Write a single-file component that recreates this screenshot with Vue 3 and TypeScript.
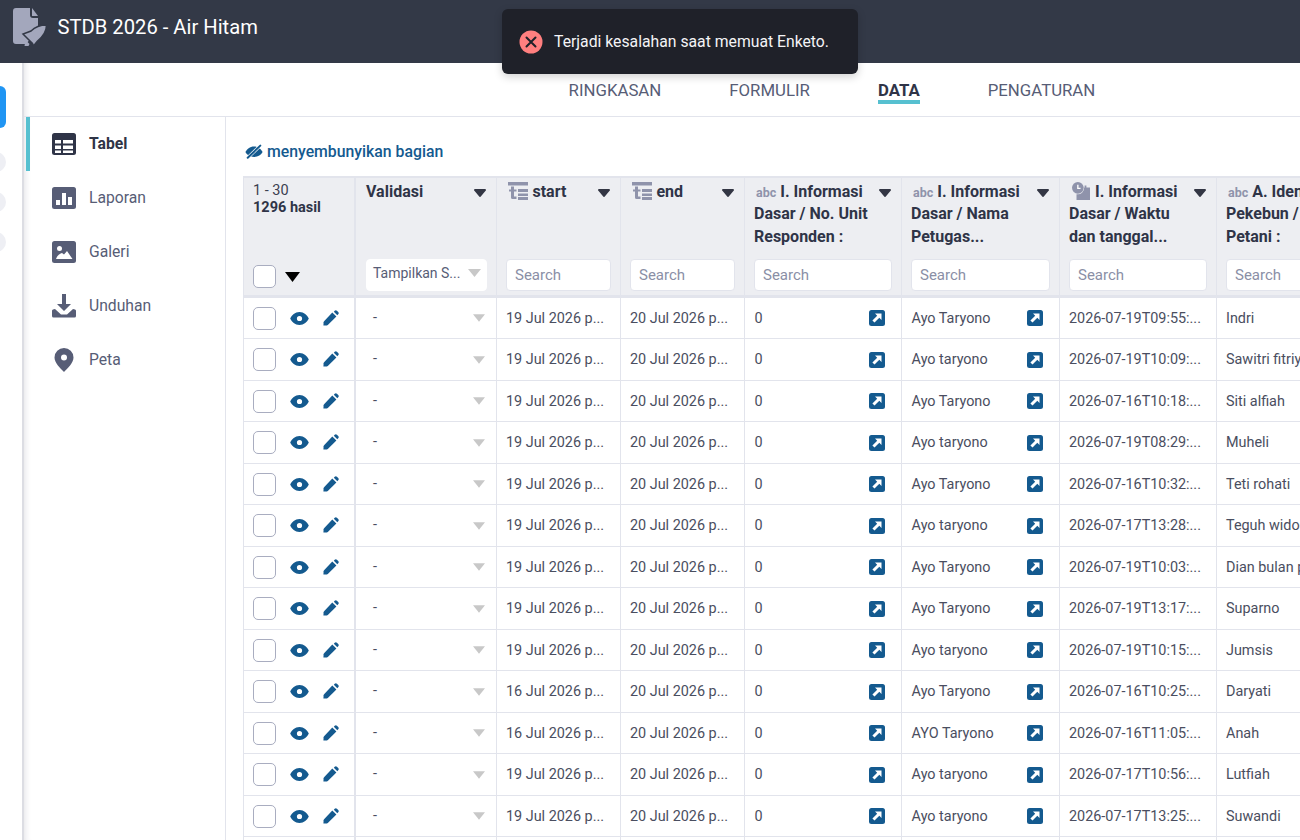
<template>
  <div class="page">
    <header class="topbar">
      <svg class="logo" viewBox="0 0 34 38" width="34" height="38">
        <path d="M3 0h14v7a3 3 0 0 0 3 3h5v12L13 36H3a3 3 0 0 1-3-3V3a3 3 0 0 1 3-3z" fill="#a3a7bc" />
        <path d="M19 0l6 8h-6z" fill="#a3a7bc" />
        <path d="M33.500 17C27 17 22 19 18 23l-8 3 4.500 4.500 5 5 1 2.500 4-5c5-4 9-10 9-16z" fill="#a3a7bc" stroke="#333947" stroke-width="1.500" />
        <path d="M12.500 32l4 4-1 2h-4z" fill="#a3a7bc" />
      </svg>
      <h1>STDB 2026 - Air Hitam</h1>
    </header>

    <div class="toast">
      <span class="toast-icon">
        <svg viewBox="0 0 24 24" width="24" height="24">
          <circle cx="12" cy="12" r="11.5" fill="#ff7f7f" />
          <path d="M7.5 7.5l9 9M16.5 7.5l-9 9" stroke="#1f2129" stroke-width="2" stroke-linecap="round" />
        </svg>
      </span>
      <span>Terjadi kesalahan saat memuat Enketo.</span>
    </div>

    <div class="body">
      <aside class="rail">
        <span class="rail-active"></span>
        <span class="rail-dot" v-for="n in 3" :key="n"></span>
      </aside>

      <div class="content">
        <nav class="tabs">
          <a v-for="tab in tabs" :key="tab" :class="{ active: tab === 'DATA' }">{{ tab }}</a>
        </nav>

        <div class="split">
          <ul class="side">
            <li class="side-item active">
              <svg viewBox="0 0 24 22" width="24" height="22">
                <rect width="24" height="22" rx="2.5" fill="#2f3447" />
                <path d="M3 7h6v3.5H3zM11 7h10v3.5H11zM3 12.5h6V16H3zM11 12.5h10V16H11zM3 17.5h6V20H3zM11 17.5h10V20H11z" fill="#fff" />
              </svg>
              <span>Tabel</span>
            </li>
            <li class="side-item">
              <svg viewBox="0 0 24 22" width="24" height="22">
                <rect width="24" height="22" rx="2.5" fill="#575d76" />
                <path d="M4 13h4v5H4zM10 6h4v12h-4zM16 10h4v8h-4z" fill="#fff" />
              </svg>
              <span>Laporan</span>
            </li>
            <li class="side-item">
              <svg viewBox="0 0 24 22" width="24" height="22">
                <rect width="24" height="22" rx="2.5" fill="#575d76" />
                <circle cx="7.5" cy="7.5" r="2.5" fill="#fff" />
                <path d="M4 18c1-3 3-5 6-6l2 1.500 3-3.500 5.500 8z" fill="#fff" />
              </svg>
              <span>Galeri</span>
            </li>
            <li class="side-item">
              <svg viewBox="0 0 24 24" width="24" height="24">
                <path d="M10 0h4v10h5l-7 7-7-7h5z" fill="#575d76" />
                <path d="M1 15.500l2-.500 6 5.500h6l6-5.500 2 .500a1.500 1.500 0 0 1 1 1.500v5a1.500 1.500 0 0 1-1.500 1.500h-21A1.500 1.500 0 0 1 0 22v-5a1.500 1.500 0 0 1 1-1.500z" fill="#575d76" />
              </svg>
              <span>Unduhan</span>
            </li>
            <li class="side-item">
              <svg class="pin" viewBox="0 0 20 24" width="20" height="24">
                <path fill-rule="evenodd" d="M10 0a9.500 9.500 0 0 1 9.500 9.500c0 5.500-6 11-9.500 14.500C6.500 20.500.500 15 .500 9.500A9.500 9.500 0 0 1 10 0zm0 6.500a3 3 0 1 0 0 6 3 3 0 0 0 0-6z" fill="#575d76" />
              </svg>
              <span>Peta</span>
            </li>
          </ul>

          <main class="main">
            <a class="hide-link">
              <svg viewBox="0 0 20 16" width="18" height="15">
                <path d="M10 2.500C5.500 2.500 2 5.500.500 8.500 2 11.500 5.500 14 10 14s8-2.500 9.500-5.500C18 5.500 14.500 2.500 10 2.500z" fill="#145a8f" />
                <path d="M2.500 15.500L17.500 1" stroke="#fff" stroke-width="3.500" />
                <path d="M3 15L17 1.500" stroke="#145a8f" stroke-width="2.200" stroke-linecap="round" />
              </svg>
              menyembunyikan bagian
            </a>

            <div class="tbl">
              <div class="row head">
                <div class="th first">
                  <div class="count">1 - 30<br /><b>1296 hasil</b></div>
                  <div class="select-all">
                    <span class="check"></span>
                    <svg viewBox="0 0 15 10" width="15" height="10"><path d="M0 0h15l-7.500 10z" fill="#000" /></svg>
                  </div>
                </div>
                <div v-for="col in columns" :key="col.label" class="th" :class="{ 'th-valid': col.kind === 'select' }">
                  <div class="th-top">
                    <div class="th-label">
                      <span v-if="col.kind === 'abc'" class="abc">abc</span>
                      <svg v-else-if="col.kind === 'date'" class="kind date" viewBox="0 0 20 18" width="20" height="18">
                        <rect width="20" height="3.500" fill="#8f93ab" />
                        <path d="M3 4.500h3v3h2.500v2H6v5h2.500V17H4.500A1.500 1.500 0 0 1 3 15.500v-6H1v-2h2z" fill="#8f93ab" />
                        <path d="M10 7h10v3H10zM10 11.500h10v2.500H10zM10 15h10v3H10z" fill="#8f93ab" />
                      </svg>
                      <svg v-else-if="col.kind === 'time'" class="kind time" viewBox="0 0 20 20" width="18" height="18">
                        <circle cx="6.500" cy="6.500" r="6.500" fill="#8f93ab" />
                        <path d="M6.500 3v4h3" stroke="#fff" stroke-width="1.500" fill="none" />
                        <path d="M14 4h2v2h4v14H5V13.500A7 7 0 0 0 13.500 6H14z" fill="#8f93ab" />
                      </svg>
                      {{ col.label }}
                    </div>
                    <svg class="sort" viewBox="0 0 12 8" width="12" height="8"><path d="M1 0h10a1 1 0 0 1 .8 1.600L6.800 7.500a1 1 0 0 1-1.600 0L.200 1.600A1 1 0 0 1 1 0z" fill="#333644" /></svg>
                  </div>
                  <div v-if="col.kind === 'select'" class="filter-select">
                    <span>Tampilkan S...</span>
                    <svg viewBox="0 0 13 8" width="13" height="8"><path d="M0 0h13l-6.500 8z" fill="#c8c8c8" /></svg>
                  </div>
                  <input v-else class="search" type="text" placeholder="Search" />
                </div>
              </div>

              <div v-for="(r, i) in rows" :key="i" class="row">
                <div class="td actions">
                  <span class="check"></span>
                  <svg class="eye" viewBox="0 0 20 14" width="19" height="13">
                    <path fill-rule="evenodd" d="M10 0c4.800 0 8.300 3.500 10 7-1.700 3.500-5.200 7-10 7S1.700 10.500 0 7c1.700-3.500 5.200-7 10-7zm0 4.200a2.800 2.800 0 1 0 0 5.600 2.800 2.800 0 0 0 0-5.600z" fill="#145a8f" />
                  </svg>
                  <svg class="pencil" viewBox="0 0 16 16" width="16" height="16">
                    <path d="M9.300 2.500l4.100 4.100-8.600 8.300a2 2 0 0 1-1 .5L.400 15.600l.2-3.300a2 2 0 0 1 .5-1z" fill="#145a8f" />
                    <path d="M10.800 1.700l.9-.9a1.600 1.600 0 0 1 2.200 0l1.300 1.300a1.600 1.600 0 0 1 0 2.200l-.9.900z" fill="#145a8f" />
                  </svg>
                </div>
                <div class="td valid">
                  <span>-</span>
                  <svg viewBox="0 0 13 8" width="12" height="8"><path d="M0 0h13l-6.500 8z" fill="#c8c8c8" /></svg>
                </div>
                <div class="td">{{ r.start }}</div>
                <div class="td">20 Jul 2026 p...</div>
                <div class="td link">
                  <span>0</span>
                  <svg viewBox="0 0 16 16" width="16" height="16"><use href="#open" /></svg>
                </div>
                <div class="td link">
                  <span>{{ r.officer }}</span>
                  <svg viewBox="0 0 16 16" width="16" height="16"><use href="#open" /></svg>
                </div>
                <div class="td">{{ r.time }}</div>
                <div class="td clip">{{ r.farmer }}</div>
              </div>
            </div>
          </main>
        </div>
      </div>
    </div>

    <svg class="defs" width="0" height="0">
      <symbol id="open" viewBox="0 0 16 16">
        <rect width="16" height="16" rx="2.500" fill="#145a8f" />
        <path d="M6 3.500h6.500V10L10.300 7.800 5.500 12.600 3.400 10.500l4.800-4.800z" fill="#fff" />
      </symbol>
    </svg>
  </div>
</template>

<script setup lang="ts">
interface Column {
  label: string
  kind: 'select' | 'date' | 'abc' | 'time'
}

interface Row {
  start: string
  officer: string
  time: string
  farmer: string
}

const tabs = ['RINGKASAN', 'FORMULIR', 'DATA', 'PENGATURAN']

const columns: Column[] = [
  { label: 'Validasi', kind: 'select' },
  { label: 'start', kind: 'date' },
  { label: 'end', kind: 'date' },
  { label: 'I. Informasi Dasar / No. Unit Responden :', kind: 'abc' },
  { label: 'I. Informasi Dasar / Nama Petugas...', kind: 'abc' },
  { label: 'I. Informasi Dasar / Waktu dan tanggal...', kind: 'time' },
  { label: 'A. Identitas Pekebun / Petani :', kind: 'abc' },
]

const mk = (day: string, officer: string, time: string, farmer: string): Row => ({
  start: `${day} Jul 2026 p...`,
  officer,
  time: `2026-07-${time}:...`,
  farmer,
})

const rows: Row[] = [
  mk('19', 'Ayo Taryono', '19T09:55', 'Indri'),
  mk('19', 'Ayo taryono', '19T10:09', 'Sawitri fitriyani'),
  mk('19', 'Ayo Taryono', '16T10:18', 'Siti alfiah'),
  mk('19', 'Ayo taryono', '19T08:29', 'Muheli'),
  mk('19', 'Ayo Taryono', '16T10:32', 'Teti rohati'),
  mk('19', 'Ayo taryono', '17T13:28', 'Teguh widodo'),
  mk('19', 'Ayo Taryono', '19T10:03', 'Dian bulan pertiwi'),
  mk('19', 'Ayo Taryono', '19T13:17', 'Suparno'),
  mk('19', 'Ayo taryono', '19T10:15', 'Jumsis'),
  mk('16', 'Ayo Taryono', '16T10:25', 'Daryati'),
  mk('16', 'AYO Taryono', '16T11:05', 'Anah'),
  mk('19', 'Ayo taryono', '17T10:56', 'Lutfiah'),
  mk('19', 'Ayo taryono', '17T13:25', 'Suwandi'),
  mk('19', 'Ayo taryono', '17T13:30', 'Sarmin'),
]
</script>

<style>
html,
body {
  margin: 0;
  overflow: hidden;
  background: #fff;
}
</style>

<style scoped>
.page {
  position: relative;
  width: 1300px;
  height: 840px;
  overflow: hidden;
  display: flex;
  flex-direction: column;
  font-family: Roboto, "Liberation Sans", sans-serif;
  color: #3b3f50;
}

.topbar {
  flex: 0 0 63px;
  display: flex;
  align-items: center;
  padding: 0 0 9px 13px;
  box-sizing: border-box;
  background: #333947;
}

.logo {
  margin-right: 10.5px;
}

.topbar h1 {
  margin: 0;
  font-size: 20.2px;
  font-weight: 400;
  color: #fff;
}

.toast {
  position: absolute;
  left: 502px;
  top: 9px;
  width: 356px;
  height: 65px;
  box-sizing: border-box;
  padding-left: 17px;
  display: flex;
  align-items: center;
  gap: 11px;
  border-radius: 6px;
  background: #1f2129;
  color: #f4f4f6;
  font-size: 15.75px;
  box-shadow: 0 3px 8px rgba(0, 0, 0, 0.18);
}

.toast-icon {
  display: flex;
}

.body {
  flex: 1;
  display: flex;
  min-height: 0;
}

.rail {
  flex: 0 0 22px;
  display: flex;
  flex-direction: column;
  align-items: flex-start;
  padding-top: 23px;
  border-right: 2px solid #dcdde3;
  overflow: hidden;
  background: #fff;
}

.rail-active {
  width: 20px;
  height: 42px;
  margin-left: -14px;
  margin-bottom: 24px;
  border-radius: 6px;
  background: #2095f3;
}

.rail-dot {
  width: 20px;
  height: 20px;
  margin-left: -14px;
  margin-bottom: 20px;
  border-radius: 50%;
  background: #eeeff4;
}

.content {
  flex: 1;
  min-width: 0;
  display: flex;
  flex-direction: column;
  box-shadow: inset 7px 0 6px -6px rgba(40, 45, 70, 0.14);
}

.tabs {
  flex: 0 0 54px;
  display: flex;
  gap: 68px;
  padding-left: 544.6px;
  box-sizing: border-box;
  border-bottom: 1px solid #e2e4ec;
}

.tabs a {
  height: 41px;
  padding-top: 18px;
  box-sizing: border-box;
  font-size: 16.8px;
  line-height: 19px;
  color: #575d76;
  white-space: nowrap;
}

.tabs a.active {
  color: #2f3447;
  font-weight: 700;
  border-bottom: 4px solid #56c0d0;
}

.split {
  flex: 1;
  display: flex;
  min-height: 0;
}

.side {
  flex: 0 0 200px;
  box-sizing: border-box;
  margin: 0 0 0 2px;
  padding: 0;
  list-style: none;
  border-right: 1px solid #e2e4ec;
}

.side-item {
  height: 54px;
  display: flex;
  align-items: center;
  padding-left: 26px;
  box-sizing: border-box;
  font-size: 15.7px;
  color: #575d76;
}

.side-item span {
  margin: 0 0 2px 13px;
}

.side-item.active {
  border-left: 4px solid #56c0d0;
  padding-left: 22px;
  color: #2f3447;
  font-weight: 700;
}

.pin {
  margin: 0 2px;
}

.main {
  flex: 1;
  min-width: 0;
  padding: 24px 0 0 17px;
  overflow: hidden;
}

.hide-link {
  height: 20px;
  margin: 0 0 15px 2px;
  display: flex;
  align-items: center;
  gap: 4px;
  font-size: 15.8px;
  font-weight: 500;
  color: #145a8f;
  white-space: nowrap;
}

.tbl {
  width: 1134px;
  border-top: 2px solid #e2e4ec;
  border-left: 1px solid #e2e4ec;
}

.row {
  display: grid;
  grid-template-columns: 112px 141px 124px 124px 157px 158px 157px 160px;
  height: 41.5px;
  box-sizing: border-box;
  border-bottom: 1.5px solid #e2e4ec;
}

.row.head {
  height: 119.5px;
  border-bottom: 3px solid #e2e4ec;
  background: #edeef2;
}

.th {
  display: flex;
  flex-direction: column;
  justify-content: space-between;
  padding: 0 9px 4px;
  border-right: 1px solid #e2e4ec;
  min-width: 0;
}

.th.first {
  padding: 4px 0 7px 9px;
  border-right-width: 2px;
}

.th.th-valid {
  padding-left: 10px;
}

.count {
  font-size: 14.5px;
  line-height: 17px;
}

.count b {
  color: #2f3447;
}

.select-all {
  display: flex;
  align-items: center;
  gap: 9px;
}

.select-all svg {
  margin-top: 2px;
}

.check {
  flex: none;
  width: 23px;
  height: 23px;
  box-sizing: border-box;
  border: 1px solid #a9adc0;
  border-radius: 5px;
  background: #fff;
}

.th-top {
  position: relative;
  padding-right: 22px;
}

.th-label {
  padding-top: 2.7px;
  font-size: 16px;
  font-weight: 700;
  line-height: 22.5px;
  color: #2f3447;
}

.abc {
  font-size: 12.5px;
  line-height: 1;
  color: #8f93ab;
  margin-left: 2px;
}

.kind {
  vertical-align: -3px;
  margin-top: -4px;
  margin-right: 1px;
}

.kind.date {
  margin-left: 1.5px;
}

.kind.time {
  margin-left: 3px;
}

.sort {
  position: absolute;
  right: 1px;
  top: 11px;
}

.search,
.filter-select {
  flex: none;
  width: 100%;
  height: 32px;
  box-sizing: border-box;
  border: 1px solid #e2e4ec;
  border-radius: 4px;
  background: #fff;
  font-family: inherit;
}

.search {
  padding: 0 8px;
  font-size: 15px;
  outline: none;
}

.search::placeholder {
  color: #8a8fa6;
  opacity: 1;
}

.filter-select {
  display: flex;
  align-items: center;
  justify-content: space-between;
  padding: 0 5px 3px 6px;
  border-color: #fff;
  font-size: 14px;
  font-weight: 400;
  color: #575d76;
}

.td {
  display: flex;
  align-items: center;
  min-width: 0;
  padding: 0.5px 9px 0;
  border-right: 1px solid #e2e4ec;
  font-size: 14.4px;
  color: #4a4e60;
  white-space: nowrap;
  overflow: hidden;
}

.actions {
  padding-right: 0;
  border-right-width: 2px;
}

.eye {
  margin-left: 14px;
}

.pencil {
  margin-left: 14px;
  margin-top: -1px;
}

.valid,
.link {
  justify-content: space-between;
}

.valid {
  padding: 0 11px 1px 17px;
}

.valid svg {
  margin-top: 2px;
}

.link {
  padding-left: 9.6px;
  padding-right: 16px;
}

.clip {
  overflow: hidden;
}

.defs {
  position: absolute;
}
</style>
